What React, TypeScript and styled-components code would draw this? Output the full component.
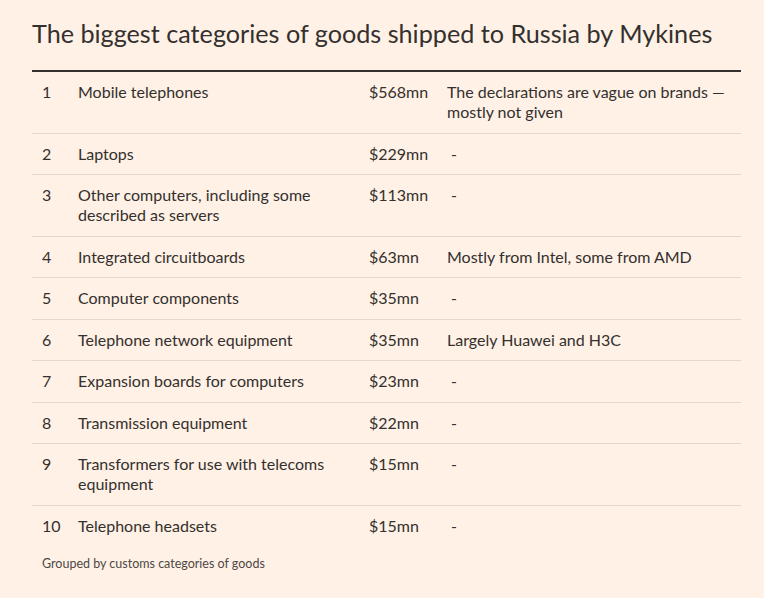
import styled, { createGlobalStyle } from 'styled-components';

const rows = [
  { rank: 1, name: 'Mobile telephones', value: '$568mn', note: 'The declarations are vague on brands — mostly not given' },
  { rank: 2, name: 'Laptops', value: '$229mn', note: '' },
  { rank: 3, name: 'Other computers, including some described as servers', value: '$113mn', note: '' },
  { rank: 4, name: 'Integrated circuitboards', value: '$63mn', note: 'Mostly from Intel, some from AMD' },
  { rank: 5, name: 'Computer components', value: '$35mn', note: '' },
  { rank: 6, name: 'Telephone network equipment', value: '$35mn', note: 'Largely Huawei and H3C' },
  { rank: 7, name: 'Expansion boards for computers', value: '$23mn', note: '' },
  { rank: 8, name: 'Transmission equipment', value: '$22mn', note: '' },
  { rank: 9, name: 'Transformers for use with telecoms equipment', value: '$15mn', note: '' },
  { rank: 10, name: 'Telephone headsets', value: '$15mn', note: '' },
];

export default function App() {
  return (
    <>
      <GlobalStyle />
      <Page>
        <Title>The biggest categories of goods shipped to Russia by Mykines</Title>
        <Table>
          {rows.map((row, i) => (
            <Row key={row.rank} $last={i === rows.length - 1}>
              <Rank>{row.rank}</Rank>
              <Cell>{row.name}</Cell>
              <Cell>{row.value}</Cell>
              <Cell>{row.note ? row.note : <Dash>-</Dash>}</Cell>
            </Row>
          ))}
        </Table>
        <Footnote>Grouped by customs categories of goods</Footnote>
      </Page>
    </>
  );
}

const GlobalStyle = createGlobalStyle`
  html, body {
    margin: 0;
    background: #fff1e5;
  }
  body {
    font-family: Lato, "Liberation Sans", sans-serif;
    color: #33302e;
  }
`;

const Page = styled.div`
  width: 764px;
  height: 598px;
  box-sizing: border-box;
  padding: 18px 23px 0 32px;
  background: #fff1e5;
`;

const Title = styled.h1`
  margin: 0 0 22px;
  font-size: 25.2px;
  line-height: 30px;
  font-weight: 400;
  color: #33302e;
`;

const Table = styled.div`
  border-top: 2px solid #33302e;
`;

const Row = styled.div<{ $last?: boolean }>`
  display: grid;
  grid-template-columns: 46px 291px 78px 1fr;
  padding: 10px 0 10.5px;
  border-bottom: 1px solid ${(p) => (p.$last ? 'transparent' : '#e3d8cf')};
  font-size: 16px;
  line-height: 20px;
`;

const Cell = styled.div`
  padding-right: 14px;
`;

const Rank = styled(Cell)`
  padding-left: 10px;
`;

const Dash = styled.span`
  margin-left: 4px;
`;

const Footnote = styled.div`
  margin-top: 9px;
  padding-left: 10px;
  font-size: 12.5px;
  line-height: 16px;
  color: #4d4845;
`;
